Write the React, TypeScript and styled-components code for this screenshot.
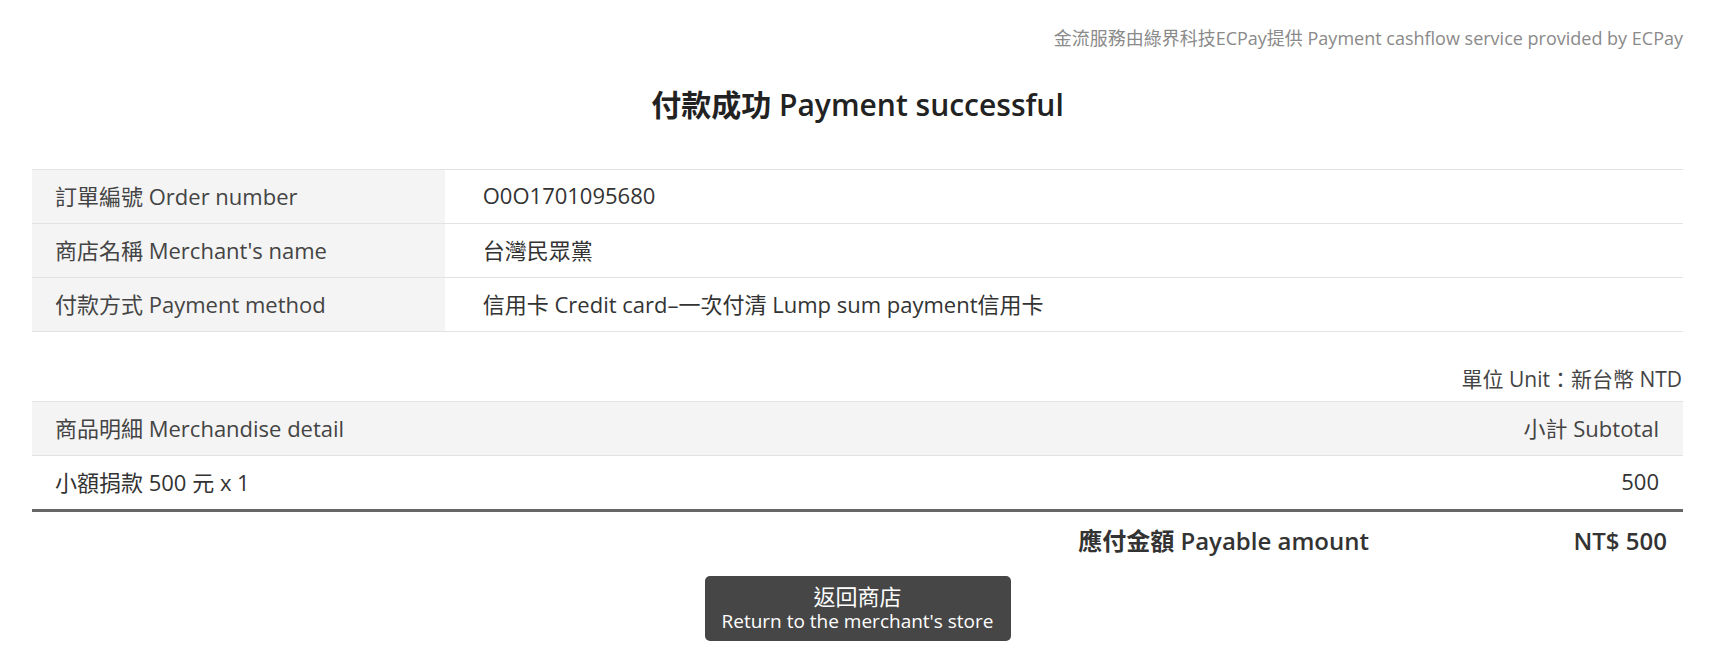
import React from "react";
import styled, { createGlobalStyle } from "styled-components";

const GlobalStyle = createGlobalStyle`
  html, body {
    margin: 0;
    padding: 0;
    background: #ffffff;
  }
  body {
    font-family: "Open Sans", "Noto Sans CJK TC", sans-serif;
    color: #333333;
  }
`;

const Page = styled.div`
  padding: 0 32px;
`;

const ProviderNote = styled.div`
  padding-top: 25px;
  text-align: right;
  font-size: 18px;
  line-height: 27px;
  color: #8a8a8a;
`;

const Title = styled.h1`
  margin: 33px 0 0;
  text-align: center;
  font-size: 30px;
  line-height: 40px;
  font-weight: 600;
  color: #222222;
`;

const InfoTable = styled.div`
  margin-top: 44px;
  border-bottom: 1px solid #e2e2e2;
`;

const InfoRow = styled.div`
  display: grid;
  grid-template-columns: 25% 1fr;
  border-top: 1px solid #e2e2e2;
  min-height: 53px;
`;

const InfoLabel = styled.div`
  display: flex;
  align-items: center;
  padding: 0 23px 3px;
  background: #f4f4f4;
  font-size: 22px;
  color: #444444;
`;

const InfoValue = styled.div`
  display: flex;
  align-items: center;
  padding: 0 38px 3px;
  font-size: 22px;
  color: #333333;
`;

const UnitNote = styled.div`
  padding: 32px 1px 7px 0;
  text-align: right;
  font-size: 21px;
  line-height: 30px;
  color: #444444;
`;

const DetailTable = styled.div`
  border-bottom: 3px solid #666666;
`;

const DetailRow = styled.div<{ $head?: boolean }>`
  display: flex;
  align-items: center;
  justify-content: space-between;
  box-sizing: border-box;
  min-height: 54px;
  padding: 0 24px 3px 23px;
  border-top: 1px solid #e2e2e2;
  background: ${(p) => (p.$head ? "#f4f4f4" : "#ffffff")};
  font-size: 22px;
  color: ${(p) => (p.$head ? "#444444" : "#333333")};
`;

const TotalRow = styled.div`
  display: flex;
  justify-content: flex-end;
  align-items: center;
  padding: 11px 0 17px;
  font-size: 24px;
  line-height: 36px;
  font-weight: 600;
  color: #333333;
`;

const TotalLabel = styled.div`
  margin-right: 16px;
`;

const TotalAmount = styled.div`
  width: 298px;
  padding-right: 16px;
  box-sizing: border-box;
  text-align: right;
`;

const ButtonWrap = styled.div`
  display: flex;
  justify-content: center;
`;

const ReturnButton = styled.button`
  width: 306px;
  padding: 8px 0 7px;
  border: none;
  border-radius: 5px;
  background: #464646;
  color: #ffffff;
  font-family: "Open Sans", "Noto Sans CJK TC", sans-serif;
  font-size: 20px;
  line-height: 25px;
  cursor: pointer;
`;

const ButtonLine = styled.span<{ $cjk?: boolean }>`
  display: block;
  font-size: ${(p) => (p.$cjk ? "22px" : "19px")};
`;

const infoRows = [
  { label: "訂單編號 Order number", value: "O0O1701095680" },
  { label: "商店名稱 Merchant's name", value: "台灣民眾黨" },
  {
    label: "付款方式 Payment method",
    value: "信用卡 Credit card–一次付清 Lump sum payment信用卡",
  },
];

export default function App() {
  return (
    <>
      <GlobalStyle />
      <Page>
        <ProviderNote>
          金流服務由綠界科技ECPay提供 Payment cashflow service provided by ECPay
        </ProviderNote>
        <Title>付款成功 Payment successful</Title>
        <InfoTable>
          {infoRows.map((r) => (
            <InfoRow key={r.label}>
              <InfoLabel>{r.label}</InfoLabel>
              <InfoValue>{r.value}</InfoValue>
            </InfoRow>
          ))}
        </InfoTable>
        <UnitNote>單位 Unit：新台幣 NTD</UnitNote>
        <DetailTable>
          <DetailRow $head>
            <span>商品明細 Merchandise detail</span>
            <span>小計 Subtotal</span>
          </DetailRow>
          <DetailRow>
            <span>小額捐款 500 元 x 1</span>
            <span>500</span>
          </DetailRow>
        </DetailTable>
        <TotalRow>
          <TotalLabel>應付金額 Payable amount</TotalLabel>
          <TotalAmount>NT$ 500</TotalAmount>
        </TotalRow>
        <ButtonWrap>
          <ReturnButton type="button">
            <ButtonLine $cjk>返回商店</ButtonLine>
            <ButtonLine>Return to the merchant's store</ButtonLine>
          </ReturnButton>
        </ButtonWrap>
      </Page>
    </>
  );
}
